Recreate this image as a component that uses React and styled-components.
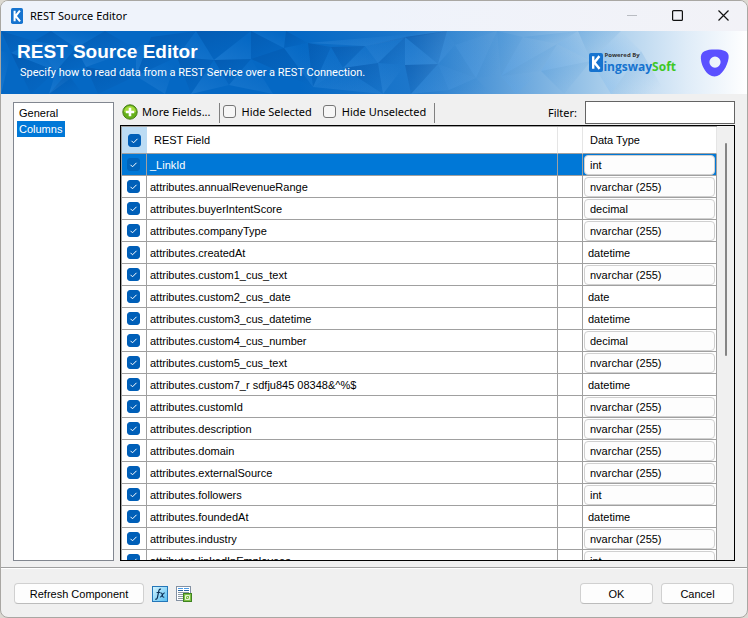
import { useState } from "react";
import styled, { createGlobalStyle } from "styled-components";

const fields = [
  ["_LinkId", "int"],
  ["attributes.annualRevenueRange", "nvarchar (255)"],
  ["attributes.buyerIntentScore", "decimal"],
  ["attributes.companyType", "nvarchar (255)"],
  ["attributes.createdAt", "datetime"],
  ["attributes.custom1_cus_text", "nvarchar (255)"],
  ["attributes.custom2_cus_date", "date"],
  ["attributes.custom3_cus_datetime", "datetime"],
  ["attributes.custom4_cus_number", "decimal"],
  ["attributes.custom5_cus_text", "nvarchar (255)"],
  ["attributes.custom7_r sdfju845 08348&^%$", "datetime"],
  ["attributes.customId", "nvarchar (255)"],
  ["attributes.description", "nvarchar (255)"],
  ["attributes.domain", "nvarchar (255)"],
  ["attributes.externalSource", "nvarchar (255)"],
  ["attributes.followers", "int"],
  ["attributes.foundedAt", "datetime"],
  ["attributes.industry", "nvarchar (255)"],
  ["attributes.linkedInEmployees", "int"],
];

const fixedTypes = ["date", "datetime"];

const shards = [
  ["0,0 33,10 10,22", "d"], ["0,20 10,22 0,63", "l"], ["10,22 33,10 55,40", "l"], ["10,22 55,40 30,63", "d"],
  ["33,10 50,0 75,17", "d"], ["33,10 75,17 55,40", "l"], ["50,0 104,0 75,17", "l"], ["75,17 104,0 135,18", "d"],
  ["55,40 75,17 85,36", "d"], ["55,40 85,36 48,63", "l"], ["85,36 75,17 135,18", "l"], ["85,36 135,45 97,63", "d"],
  ["48,63 66,42 82,63", "d"], ["135,18 150,6 135,45", "l"], ["150,6 195,0 176,26", "d"], ["150,6 176,26 135,45", "d"],
  ["135,45 176,26 164,63", "l"], ["176,26 195,0 213,29", "l"], ["176,26 213,29 190,63", "d"], ["190,63 213,29 228,54", "l"],
  ["195,0 250,0 213,29", "d"], ["213,29 250,0 250,28", "l"], ["213,29 250,28 228,54", "d"], ["228,54 250,28 272,63", "l"],
  ["250,28 250,0 283,17", "d"], ["250,0 285,0 283,17", "l"], ["285,0 307,12 283,17", "d"], ["283,17 307,12 312,56", "l"],
  ["250,28 283,17 312,56", "d"], ["307,12 330,16 312,56", "d"], ["330,16 342,37 312,56", "l"], ["330,16 364,15 342,37", "d"],
  ["364,15 377,32 342,37", "l"], ["342,37 377,32 382,63", "d"], ["312,56 342,37 382,63", "l"], ["364,15 404,6 377,32", "l"],
  ["364,15 446,0 404,6", "d"], ["307,12 364,15 446,0", "l"], ["377,32 404,6 404,34", "d"], ["404,6 437,33 404,34", "l"],
  ["404,6 446,0 437,33", "d"], ["377,32 404,34 382,63", "l"], ["404,34 437,33 410,63", "d"], ["437,33 448,59 410,63", "l"],
  ["446,0 454,14 437,33", "l"], ["454,14 475,47 437,33", "p"], ["437,33 475,47 448,59", "l"], ["446,0 496,0 454,14", "p"],
  ["454,14 496,0 475,47", "l"], ["475,47 496,0 500,45", "p"], ["500,45 522,6 556,13", "l"], ["496,0 522,6 500,45", "p"],
  ["500,45 556,13 540,40", "p"], ["522,6 577,0 556,13", "p"], ["556,13 577,0 590,30", "l"], ["540,40 556,13 590,30", "l"],
  ["540,40 590,30 563,63", "p"], ["500,45 540,40 515,63", "l"], ["577,0 620,0 590,30", "p"], ["590,30 640,20 610,63", "l"],
  ["448,59 475,47 490,63", "p"], ["590,30 620,0 640,20", "l"], ["640,20 665,63 610,63", "p"],
];

function Facets() {
  return (
    <FacetArt viewBox="0 0 746 63" preserveAspectRatio="none" aria-hidden="true">
      <defs>
        <linearGradient id="base" x1="0" x2="1">
          <stop offset="0.4" stopColor="#0568c4" />
          <stop offset="0.55" stopColor="#1d77cb" />
          <stop offset="0.66" stopColor="#569bd9" />
          <stop offset="0.8" stopColor="#a3caea" />
          <stop offset="0.92" stopColor="#dfecf8" />
          <stop offset="1" stopColor="#fff" />
        </linearGradient>
        <linearGradient id="d" x1="0" y1="0" x2="0.7" y2="1">
          <stop offset="0" stopColor="#003a85" stopOpacity="0.26" />
          <stop offset="1" stopColor="#003a85" stopOpacity="0.02" />
        </linearGradient>
        <linearGradient id="l" x1="0" y1="1" x2="0.6" y2="0">
          <stop offset="0" stopColor="#5aa8f0" stopOpacity="0.22" />
          <stop offset="1" stopColor="#5aa8f0" stopOpacity="0" />
        </linearGradient>
        <linearGradient id="p" x1="0" y1="0" x2="0.7" y2="1">
          <stop offset="0" stopColor="#2f86d2" stopOpacity="0.22" />
          <stop offset="1" stopColor="#2f86d2" stopOpacity="0" />
        </linearGradient>
      </defs>
      <rect width="746" height="63" fill="url(#base)" />
      {shards.map(([points, tone]) => (
        <polygon key={points} points={points} fill={`url(#${tone})`} />
      ))}
    </FacetArt>
  );
}

function KIcon({ width, height }) {
  return (
    <svg width={width} height={height} viewBox="0 0 14 18" preserveAspectRatio="none" aria-hidden="true">
      <rect width="14" height="18" rx="2" fill="#1673cf" />
      <path d="M4.2 3v12M10.4 3L5.4 9l5.2 6" fill="none" stroke="#fff" strokeWidth="2.4" />
    </svg>
  );
}

function PlusIcon() {
  return (
    <svg width="16" height="16" viewBox="0 0 16 16" aria-hidden="true">
      <circle cx="8" cy="8" r="7.2" fill="#66b01a" stroke="#4b7f1c" />
      <path d="M2 8a6 6 0 0 1 12 0q-6 2-12 0z" fill="#a5da3c" />
      <path d="M8 3.8v8.4M3.8 8h8.4" stroke="#fff" strokeWidth="2.6" />
    </svg>
  );
}

function FxIcon() {
  return (
    <svg width="16" height="16" viewBox="0 0 16 16" aria-hidden="true">
      <defs>
        <linearGradient id="fx" x1="0" y1="0" x2="1" y2="1">
          <stop offset="0" stopColor="#d8f6ff" />
          <stop offset="1" stopColor="#55bdf2" />
        </linearGradient>
      </defs>
      <rect x="0.5" y="0.5" width="15" height="15" fill="url(#fx)" stroke="#2476b8" />
      <path d="M9 3.2C7.2 2.6 6.9 4.4 6.5 6.5L5.4 11.7C5.1 13 4.3 13.6 3.2 13M4.6 6.5h3.8" fill="none" stroke="#0c3158" strokeWidth="1.2" />
      <path d="M8.6 7.2c1.2-.6 1.5.6 1.8 2.1s.7 2.4 1.9 1.6M12.8 7c-1.2-.4-1.8 1-2.5 2.1s-1.1 2.2-2.3 1.8" fill="none" stroke="#0c3158" strokeWidth="1.1" />
    </svg>
  );
}

function SheetIcon() {
  return (
    <svg width="16" height="16" viewBox="0 0 16 16" aria-hidden="true">
      <rect x="0.5" y="0.5" width="14" height="14" fill="#fff" stroke="#8391a3" />
      <path d="M2 2.5h5M8 2.5h5" stroke="#4a9be8" />
      <path d="M2 4.5h5M8 4.5h5" stroke="#27639f" />
      <path d="M2 6.5h11M2 8.5h5M2 10.5h5M2 12.5h5" stroke="#8a97a4" />
      <rect x="7.5" y="7.5" width="8" height="8" fill="#7fbf44" stroke="#3f8420" />
      <path d="M9.5 9.5h4v4h-4zM10.5 10.5l2 2" fill="none" stroke="#e6f5d8" />
    </svg>
  );
}

function App() {
  const [page, setPage] = useState("Columns");
  const [current, setCurrent] = useState(0);

  return (
    <Window>
      <GlobalStyle />
      <TitleBar>
        <KIcon width={12} height={16} />
        <TitleText>REST Source Editor</TitleText>
        <CaptionButton aria-label="Minimize" disabled>
          <svg width="10" height="11" viewBox="0 0 10 11"><path d="M0 5.5h10" stroke="#b9bcc2" /></svg>
        </CaptionButton>
        <CaptionButton aria-label="Maximize">
          <svg width="11" height="11" viewBox="0 0 11 11"><rect x="0.6" y="0.6" width="9.8" height="9.8" rx="1" fill="none" stroke="#111" strokeWidth="1.2" /></svg>
        </CaptionButton>
        <CaptionButton aria-label="Close">
          <svg width="11" height="11" viewBox="0 0 11 11"><path d="M0.5 0.5l10 10M10.5 0.5l-10 10" stroke="#111" strokeWidth="1.2" /></svg>
        </CaptionButton>
      </TitleBar>

      <Banner>
        <Facets />
        <BannerText>
          <h1>REST Source Editor</h1>
          <p>Specify how to read data from a REST Service over a REST Connection.</p>
        </BannerText>
        <Brand>
          <KIcon width={14} height={19} />
          <BrandText>
            <small>Powered By</small>
            <strong>ingsway<em>Soft</em></strong>
          </BrandText>
        </Brand>
        <svg width="30" height="28" viewBox="0 0 30 28" aria-hidden="true">
          <path fillRule="evenodd" fill="#5b50ff" d="M15 .5c4.5 0 8 .4 10.5 1.7 2.6 1.4 3.5 3.6 3.1 6.8C27.6 16.5 22 27.5 14.500 27.500 7 27.500 1.500 17.500.9 10 .6 6 1.600 3.700 4.400 2.200 7 .9 10.500.5 15 .5zM15 7.500a5.600 5.600 0 1 0 0 11.200 5.600 5.600 0 1 0 0-11.200z" />
        </svg>
      </Banner>

      <Content>
        <Pages>
          {["General", "Columns"].map((name) => (
            <PageButton key={name} $active={page === name} onClick={() => setPage(name)}>{name}</PageButton>
          ))}
        </Pages>

        <Main>
          <Toolbar>
            <MoreButton><PlusIcon />More Fields...</MoreButton>
            <Separator />
            <Option><Check type="checkbox" />Hide Selected</Option>
            <Option><Check type="checkbox" />Hide Unselected</Option>
            <Separator />
            <FilterLabel htmlFor="filter">Filter:</FilterLabel>
            <FilterInput id="filter" type="text" />
          </Toolbar>

          <GridFrame>
            <GridView>
              <Table>
                <colgroup>
                  <col width="25" />
                  <col />
                  <col width="25" />
                  <col width="134" />
                </colgroup>
                <thead>
                  <tr>
                    <HeadCell $hot><Check type="checkbox" aria-label="Select all" defaultChecked /></HeadCell>
                    <HeadCell $ruled>REST Field</HeadCell>
                    <HeadCell $ruled />
                    <HeadCell $ruled>Data Type</HeadCell>
                  </tr>
                </thead>
                <tbody>
                  {fields.map(([name, type], i) => (
                    <Row key={name} $current={i === current} onClick={() => setCurrent(i)}>
                      <Cell $center><Check type="checkbox" aria-label={name} defaultChecked $dim={i === current} /></Cell>
                      <Cell>{name}</Cell>
                      <Cell />
                      <Cell $type={!fixedTypes.includes(type)}>
                        {fixedTypes.includes(type) ? <Fixed>{type}</Fixed> : (
                          <TypeSelect aria-label={`${name} type`} defaultValue={type}>
                            <option>{type}</option>
                          </TypeSelect>
                        )}
                      </Cell>
                    </Row>
                  ))}
                </tbody>
              </Table>
            </GridView>
            <ScrollTrack><ScrollThumb /></ScrollTrack>
          </GridFrame>
        </Main>
      </Content>

      <Footer>
        <PushButton $wide>Refresh Component</PushButton>
        <IconButton aria-label="Expression"><FxIcon /></IconButton>
        <IconButton aria-label="Documentation"><SheetIcon /></IconButton>
        <Spacer />
        <PushButton>OK</PushButton>
        <PushButton>Cancel</PushButton>
      </Footer>
    </Window>
  );
}

const GlobalStyle = createGlobalStyle`
  * {
    box-sizing: border-box;
  }
  body {
    margin: 0;
    background: #dcd9d2;
    color: #000;
    font: 11px/14px "Liberation Sans", Arial, sans-serif;
  }
  button, input, select {
    font: inherit;
    color: inherit;
    margin: 0;
  }
`;

const Window = styled.div`
  display: flex;
  flex-direction: column;
  height: 100vh;
  border: 1px solid #a9a7a3;
  border-radius: 8px;
  overflow: hidden;
  background: #f0f0f0;
`;

const TitleBar = styled.header`
  display: flex;
  align-items: center;
  height: 30px;
  flex: none;
  padding-left: 10px;
  background: linear-gradient(90deg, #eff3fb 50%, #f2f2f7);
`;

const TitleText = styled.span`
  flex: 1;
  padding-left: 7px;
  font: 11px/16px "Noto Sans", sans-serif;
`;

const CaptionButton = styled.button`
  display: grid;
  place-items: center;
  width: 46px;
  height: 30px;
  padding: 0 1px 2px 0;
  border: 0;
  background: none;
`;

const Banner = styled.section`
  position: relative;
  display: flex;
  align-items: center;
  height: 63px;
  flex: none;
  padding-right: 17px;
  background: #0468c4;
  > * {
    position: relative;
  }
`;

const FacetArt = styled.svg`
  && {
    position: absolute;
  }
  inset: 0;
  width: 100%;
  height: 100%;
`;

const BannerText = styled.div`
  flex: 1;
  align-self: flex-start;
  padding: 10px 0 0 16px;
  color: #fff;
  h1 {
    margin: 0;
    font: bold 19px/22px "Liberation Sans", Arial, sans-serif;
  }
  p {
    margin: 3px 0 0 3px;
    font-family: Roboto, sans-serif;
  }
`;

const Brand = styled.div`
  display: flex;
  align-items: center;
  margin-right: 24px;
`;

const BrandText = styled.div`
  display: flex;
  flex-direction: column;
  font-family: "Open Sans", sans-serif;
  small {
    padding-left: 1px;
    font-size: 6px;
    line-height: 8px;
    font-weight: 700;
    color: #333;
  }
  strong {
    font-size: 12px;
    line-height: 15px;
    color: #1673cf;
  }
  em {
    font-style: normal;
    color: #3ec824;
  }
`;

const Content = styled.main`
  display: flex;
  flex: 1;
  min-height: 0;
  gap: 6px;
  padding: 6px 12px 6px;
  border-bottom: 1px solid #a0a0a0;
`;

const Pages = styled.nav`
  width: 101px;
  flex: none;
  margin-top: 2px;
  padding: 2px 3px;
  border: 1px solid #828790;
  background: #fff;
`;

const PageButton = styled.button`
  display: block;
  height: 16px;
  padding: 0 3px 0 2px;
  border: 0;
  background: ${({ $active }) => ($active ? "#0078d7" : "transparent")};
  color: ${({ $active }) => ($active ? "#fff" : "#000")};
`;

const Main = styled.section`
  display: flex;
  flex-direction: column;
  flex: 1;
  min-width: 0;
`;

const Toolbar = styled.div`
  display: flex;
  align-items: center;
  height: 25px;
  flex: none;
  font: 11px/16px "Noto Sans", sans-serif;
`;

const MoreButton = styled.button`
  display: flex;
  align-items: center;
  gap: 4px;
  padding: 0 8px 1px 2px;
  border: 0;
  background: none;
`;

const Separator = styled.span`
  width: 1px;
  height: 20px;
  background: #808080;
`;

const Option = styled.label`
  display: flex;
  align-items: center;
  gap: 6px;
  padding: 0 8px 2px 3px;
`;

const check = encodeURIComponent(
  '<svg xmlns="http://www.w3.org/2000/svg" viewBox="0 0 13 13"><path d="M3.5 6.8l2 2 4-4" fill="none" stroke="#fff"/></svg>'
);

const Check = styled.input`
  appearance: none;
  display: block;
  flex: none;
  width: 13px;
  height: 13px;
  border: 1px solid #767676;
  border-radius: 3px;
  background: #f6f6f6;
  &:checked {
    border-color: ${({ $dim }) => ($dim ? "#0064bb" : "#005fb8")};
    background: ${({ $dim }) => ($dim ? "#0064bb" : "#005fb8")} url("data:image/svg+xml,${check}") center / 13px 13px;
  }
`;

const FilterLabel = styled.label`
  margin-left: auto;
  padding-right: 8px;
`;

const FilterInput = styled.input`
  width: 150px;
  height: 23px;
  padding: 2px 4px;
  border: 1px solid #646464;
  background: #fff;
`;

const GridFrame = styled.div`
  display: flex;
  flex: 1;
  min-height: 0;
  border: 1px solid #000;
  background: #f0f0f0;
`;

const GridView = styled.div`
  flex: 1;
  min-width: 0;
  overflow: hidden;
  border: solid #a0a0a0;
  border-width: 1px 0 0 1px;
`;

const Table = styled.table`
  width: 100%;
  table-layout: fixed;
  border-collapse: separate;
  border-spacing: 0;
  background: #fff;
`;

const HeadCell = styled.th`
  height: 27px;
  padding: ${({ $hot }) => ($hot ? "0 6px" : "0 7px")};
  border-bottom: 1px solid #a0a0a0;
  border-right: ${({ $ruled }) => ($ruled ? "1px solid #e5e5e5" : "0")};
  background: ${({ $hot }) => ($hot ? "#bcdcf4" : "#fff")};
  font-weight: 400;
  text-align: left;
`;

const Row = styled.tr`
  background: ${({ $current }) => ($current ? "#0078d7" : "#fff")};
  color: ${({ $current }) => ($current ? "#fff" : "#000")};
`;

const Cell = styled.td`
  height: 22px;
  padding: ${({ $type, $center }) => ($type ? "0 1px" : $center ? "0 5px" : "0 3px")};
  border: solid #a0a0a0;
  border-width: 0 1px 1px 0;
  white-space: nowrap;
`;

const Fixed = styled.span`
  padding-left: 2px;
`;

const TypeSelect = styled.select`
  appearance: none;
  display: block;
  width: 100%;
  height: 20px;
  padding: 0 5px;
  border: 1px solid #d0d0d0;
  border-radius: 4px;
  background: #fdfdfd;
  color: #000;
`;

const ScrollTrack = styled.div`
  width: 17px;
  padding: 17px 7px 0 8px;
`;

const ScrollThumb = styled.div`
  height: 51%;
  border-radius: 1px;
  background: #858585;
`;

const Footer = styled.footer`
  display: flex;
  align-items: center;
  height: 49px;
  flex: none;
  gap: 8px;
  padding: 1px 13px 0;
  border-top: 1px solid #fff;
`;

const PushButton = styled.button`
  width: ${({ $wide }) => ($wide ? "130px" : "73px")};
  height: 21px;
  padding: 0;
  border: 1px solid #d0d0d0;
  border-bottom-color: #bcbcbc;
  border-radius: 4px;
  background: #fdfdfd;
`;

const IconButton = styled.button`
  display: grid;
  padding: 0;
  border: 0;
  background: none;
`;

const Spacer = styled.span`
  flex: 1;
`;

export default App;
